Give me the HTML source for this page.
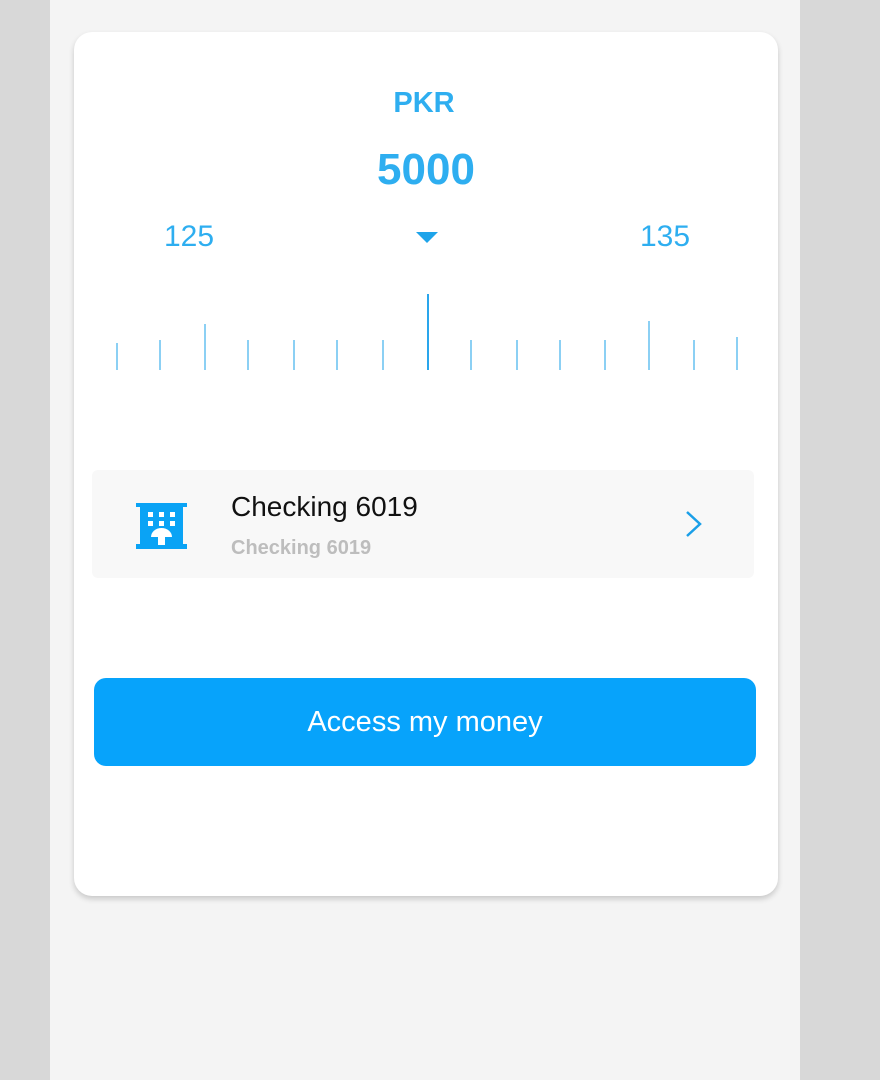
<!DOCTYPE html>
<html><head><style>
body{margin:0;width:880px;height:1080px;background:#d8d8d8;font-family:"Liberation Sans",Roboto,sans-serif;position:relative;overflow:hidden}
.page{position:absolute;left:50px;top:0;width:750px;height:1080px;background:#f4f4f4}
.card{position:absolute;left:74px;top:32px;width:704px;height:864px;background:#fff;border-radius:18px;box-shadow:0 3px 6px rgba(0,0,0,.18)}
.t{position:absolute;color:#2eaef0;text-align:center}
.tick{position:absolute;width:2px;background:#8cd0f4}
</style></head><body>
<div class="page"></div>
<div class="card"></div>
<div class="t" style="left:324px;width:200px;top:87px;font-size:29px;font-weight:bold">PKR</div>
<div class="t" style="left:324px;width:204px;top:145px;font-size:44px;font-weight:bold">5000</div>
<div class="t" style="left:139px;width:100px;top:220px;font-size:30px">125</div>
<div class="t" style="left:615px;width:100px;top:220px;font-size:30px">135</div>
<div style="position:absolute;left:416px;top:232px;width:0;height:0;border-left:11px solid transparent;border-right:11px solid transparent;border-top:11px solid #1ea4ea"></div>
<div class="tick" style="left:116px;top:343px;height:27px"></div>
<div class="tick" style="left:159px;top:340px;height:30px"></div>
<div class="tick" style="left:204px;top:324px;height:46px"></div>
<div class="tick" style="left:247px;top:340px;height:30px"></div>
<div class="tick" style="left:293px;top:340px;height:30px"></div>
<div class="tick" style="left:336px;top:340px;height:30px"></div>
<div class="tick" style="left:382px;top:340px;height:30px"></div>
<div class="tick" style="left:427px;top:294px;height:76px;background:#2aa6ec"></div>
<div class="tick" style="left:470px;top:340px;height:30px"></div>
<div class="tick" style="left:516px;top:340px;height:30px"></div>
<div class="tick" style="left:559px;top:340px;height:30px"></div>
<div class="tick" style="left:604px;top:340px;height:30px"></div>
<div class="tick" style="left:648px;top:321px;height:49px"></div>
<div class="tick" style="left:693px;top:340px;height:30px"></div>
<div class="tick" style="left:736px;top:337px;height:33px"></div>
<div style="position:absolute;left:92px;top:470px;width:662px;height:108px;background:#f8f8f8;border-radius:6px"></div>
<svg style="position:absolute;left:136px;top:503px" width="51" height="46" viewBox="0 0 51 46">
<rect x="0" y="0" width="51" height="4" fill="#0aa3f5"/>
<rect x="4" y="3" width="43" height="38" fill="#0aa3f5"/>
<rect x="0" y="41" width="51" height="5" fill="#0aa3f5"/>
<g fill="#fff"><rect x="12" y="9" width="5" height="5"/><rect x="23" y="9" width="5" height="5"/><rect x="34" y="9" width="5" height="5"/>
<rect x="12" y="18" width="5" height="5"/><rect x="23" y="18" width="5" height="5"/><rect x="34" y="18" width="5" height="5"/>
<path d="M15 34a10.5 9 0 0 1 21 0z"/><rect x="22" y="33" width="7" height="9"/></g>
</svg>
<div style="position:absolute;left:231px;top:491px;font-size:28px;color:#111">Checking 6019</div>
<div style="position:absolute;left:231px;top:537px;font-size:20px;color:#bdbdbd;font-weight:bold">Checking 6019</div>
<svg style="position:absolute;left:684px;top:509px" width="20" height="30" viewBox="0 0 20 30"><path d="M3 3l13 12L3 27" fill="none" stroke="#1a9fe8" stroke-width="2.5"/></svg>
<div style="position:absolute;left:94px;top:678px;width:662px;height:88px;background:#07a3fb;border-radius:12px;color:#fff;font-size:29px;text-align:center;line-height:88px">Access my money</div>
</body></html>
